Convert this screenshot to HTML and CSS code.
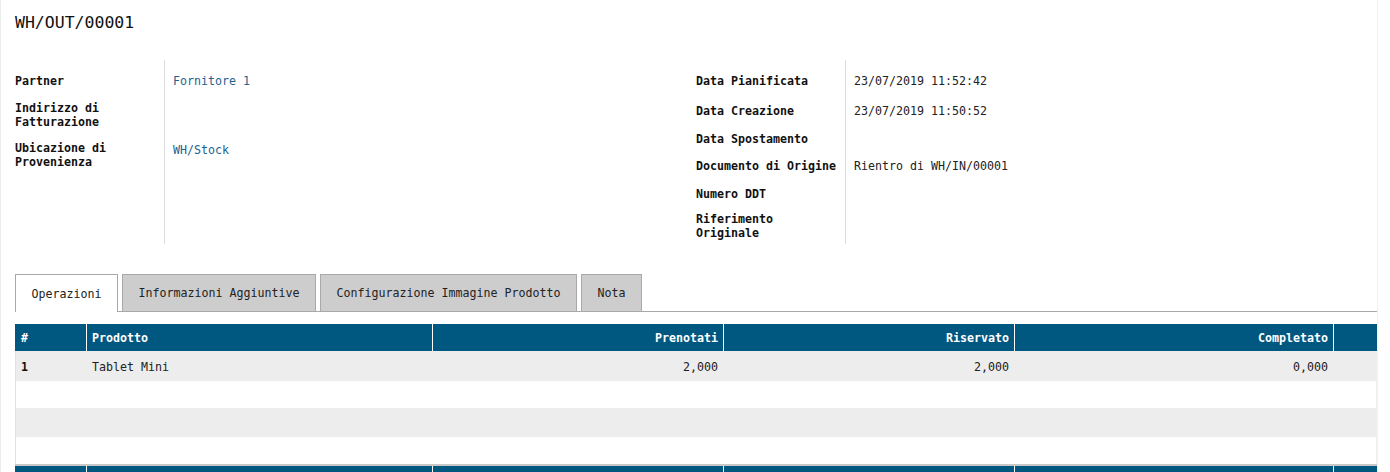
FILE: index.html
```html
<!DOCTYPE html>
<html lang="it">
<head>
<meta charset="utf-8">
<title>WH/OUT/00001</title>
<link rel="stylesheet" href="styles.css">
</head>
<body>
<div class="sheet">
  <h1 class="title">WH/OUT/00001</h1>

  <div class="form">
    <div class="group group-left">
      <div class="label r30">Partner</div>
      <div class="value r30"><a class="link" href="#">Fornitore 1</a></div>
      <div class="label r38">Indirizzo di Fatturazione</div>
      <div class="value r38"></div>
      <div class="label r42">Ubicazione di Provenienza</div>
      <div class="value r42 top"><a class="link" href="#">WH/Stock</a></div>
    </div>
    <div class="group group-right">
      <div class="label r30">Data Pianificata</div>
      <div class="value r30">23/07/2019 11:52:42</div>
      <div class="label r30">Data Creazione</div>
      <div class="value r30">23/07/2019 11:50:52</div>
      <div class="label r26">Data Spostamento</div>
      <div class="value r26"></div>
      <div class="label r28">Documento di Origine</div>
      <div class="value r28">Rientro di WH/IN/00001</div>
      <div class="label r28">Numero DDT</div>
      <div class="value r28"></div>
      <div class="label r36">Riferimento Originale</div>
      <div class="value r36"></div>
    </div>
  </div>

  <div class="tabs">
    <div class="tab active">Operazioni</div>
    <div class="tab">Informazioni Aggiuntive</div>
    <div class="tab">Configurazione Immagine Prodotto</div>
    <div class="tab">Nota</div>
  </div>

  <div class="grid">
    <div class="grow head">
      <div class="cell">#</div>
      <div class="cell">Prodotto</div>
      <div class="cell num">Prenotati</div>
      <div class="cell num">Riservato</div>
      <div class="cell num">Completato</div>
      <div class="cell"></div>
    </div>
    <div class="grow body odd">
      <div class="cell bold">1</div>
      <div class="cell">Tablet Mini</div>
      <div class="cell num">2,000</div>
      <div class="cell num">2,000</div>
      <div class="cell num">0,000</div>
      <div class="cell"></div>
    </div>
    <div class="grow body even"><div class="cell"></div><div class="cell"></div><div class="cell"></div><div class="cell"></div><div class="cell"></div><div class="cell"></div></div>
    <div class="grow body odd"><div class="cell"></div><div class="cell"></div><div class="cell"></div><div class="cell"></div><div class="cell"></div><div class="cell"></div></div>
    <div class="grow body even"><div class="cell"></div><div class="cell"></div><div class="cell"></div><div class="cell"></div><div class="cell"></div><div class="cell"></div></div>
    <div class="grow foot">
      <div class="cell"></div><div class="cell"></div><div class="cell"></div><div class="cell"></div><div class="cell"></div><div class="cell"></div>
    </div>
  </div>
</div>
</body>
</html>
```

FILE: styles.css
```css
html, body {
  margin: 0;
  padding: 0;
  background: #ffffff;
}

body {
  font-family: "DejaVu Sans Mono", "Liberation Mono", monospace;
  font-size: 11.63px;
  color: #222222;
}

.sheet {
  box-sizing: border-box;
  width: 1378px;
  min-height: 472px;
  padding: 0 0 0 14px;
  border-left: 1px solid #ececec;
  border-right: 1px solid #f2f2f2;
}

.title {
  margin: 0;
  padding-top: 13px;
  height: 60px;
  box-sizing: border-box;
  font-size: 16.5px;
  line-height: 20px;
  font-weight: normal;
  color: #111111;
}

.form {
  display: grid;
  grid-template-columns: 681px 681px;
}

.group {
  display: grid;
  grid-template-columns: 149px 1fr;
  align-content: start;
  padding-top: 6px;
  background: linear-gradient(#dcdcdc, #dcdcdc) 149px 0 / 1px 100% no-repeat;
}

.label {
  display: flex;
  align-items: center;
  padding-right: 8px;
  font-weight: bold;
  color: #111111;
  line-height: 14px;
}

.value {
  display: flex;
  align-items: center;
  padding-left: 9px;
  line-height: 14px;
}

.value.top {
  align-items: flex-start;
  padding-top: 9px;
  box-sizing: border-box;
}

.r26 { height: 26px; }
.r28 { height: 28px; }
.r30 { height: 30px; }
.r36 { height: 36px; }
.r38 { height: 38px; }
.r42 { height: 42px; }

.link {
  color: #1e6390;
  text-decoration: none;
}

.tabs {
  display: flex;
  gap: 4px;
  margin-top: 30px;
  height: 37px;
  border-bottom: 1px solid #a9a9a9;
}

.tab {
  display: flex;
  align-items: center;
  padding: 0 15.5px;
  border: 1px solid #a9a9a9;
  border-bottom: none;
  background: #cdcdcd;
  color: #222222;
  line-height: 14px;
}

.tab.active {
  background: #ffffff;
  height: 37px;
  margin-bottom: -1px;
}

.grid {
  margin-top: 12px;
}

.grow {
  display: grid;
  grid-template-columns: 72px 346px 291px 291px 319px 43px;
}

.cell {
  display: flex;
  align-items: center;
  padding: 0 5px;
  white-space: nowrap;
  overflow: hidden;
}

.cell:first-child {
  padding-left: 6px;
}

.body .cell {
  padding-top: 1px;
}

.body .cell.num {
  justify-content: flex-end;
  padding-right: 6px;
}

.head .cell.num {
  justify-content: flex-end;
  padding-right: 5px;
}

.head {
  height: 27px;
  background: #00577f;
}

.head .cell {
  color: #ffffff;
  font-weight: bold;
  border-right: 1px solid #ffffff;
}

.head .cell:last-child {
  border-right: none;
}

.body {
  box-shadow: inset 1px 0 #e2e2e2, inset -1px 0 #eeeeee;
}

.odd { background: #ededed; }
.even { background: #ffffff; }

.grid .body:nth-child(2) { height: 30px; }
.grid .body:nth-child(3) { height: 27px; }
.grid .body:nth-child(4) { height: 29px; }
.grid .body:nth-child(5) { height: 27px; }

.bold {
  font-weight: bold;
  color: #111111;
}

.foot {
  height: 10px;
  border-top: 2px solid #c8c8c8;
  background: #00577f;
}

.foot .cell {
  border-right: 1px solid #ffffff;
}

.foot .cell:last-child {
  border-right: none;
}
```
